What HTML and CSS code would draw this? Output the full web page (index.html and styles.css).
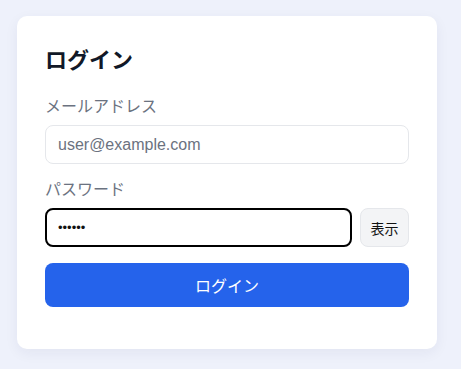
FILE: index.html
```html
<!DOCTYPE html>
<html lang="ja">
<head>
    <meta charset="UTF-8">
    <meta name="viewport" content="width=device-width, initial-scale=1.0">
    <title>ログイン</title>
    <link rel="stylesheet" href="styles.css">
</head>
<body>

<div class="card">
    <h1>ログイン</h1>
    <form id="login-form">
        <div class="field">
            <label for="email">メールアドレス</label>
            <input type="email" id="email" placeholder="user@example.com">
        </div>

        <div class="field">
            <label for="password">パスワード</label>
            <div class="password-row">
                <input type="password" id="password" class="focused" value="secret">
                <button type="button" id="toggle" class="toggle">表示</button>
            </div>
        </div>

        <button type="submit" class="submit">ログイン</button>
    </form>
</div>

<script>
    const pw = document.getElementById('password');
    pw.focus();
    pw.setSelectionRange(pw.value.length, pw.value.length);

    document.getElementById('toggle').addEventListener('click', function() {
        if (pw.type === 'password') {
            pw.type = 'text';
            this.textContent = '隠す';
        } else {
            pw.type = 'password';
            this.textContent = '表示';
        }
    });
</script>
</body>
</html>
```

FILE: styles.css
```css
/* Login card */
* {
    box-sizing: border-box;
}
body {
    margin: 0;
    padding: 16px 17px;
    background-color: #eef1fb;
    font-family: "Liberation Sans", "Noto Sans CJK JP", sans-serif;
}
.card {
    width: 420px;
    padding: 28px 28px 42px;
    background-color: #fff;
    border-radius: 10px;
    box-shadow: 0 4px 14px rgba(30, 41, 90, 0.06);
}
h1 {
    margin: 0 0 20px;
    font-size: 22px;
    line-height: 33px;
    font-weight: bold;
    color: #111827;
}
.field {
    margin-bottom: 16px;
}
label {
    display: block;
    margin-bottom: 8px;
    font-size: 16px;
    line-height: 20px;
    color: #6b7280;
}
input {
    width: 100%;
    height: 39px;
    padding: 0 12px;
    font-family: inherit;
    font-size: 16px;
    color: #111;
    border: 1px solid #e5e7eb;
    border-radius: 8px;
    outline: none;
}
input::placeholder {
    color: #6b7280;
}
.password-row {
    display: flex;
    gap: 8px;
}
.password-row input {
    flex: 1;
}
.focused {
    border: 2px solid #000;
    padding: 0 11px;
    font-size: 13px;
}
.toggle {
    width: 49px;
    height: 39px;
    padding: 0;
    font-family: inherit;
    font-size: 14px;
    color: #111;
    background-color: #f3f4f6;
    border: 1px solid #e5e7eb;
    border-radius: 8px;
    cursor: pointer;
}
.submit {
    display: block;
    width: 100%;
    height: 44px;
    margin-top: 14px;
    font-family: inherit;
    font-size: 16px;
    color: #fff;
    background-color: #2563eb;
    border: none;
    border-radius: 8px;
    cursor: pointer;
}
.submit:hover {
    background-color: #1d4ed8;
}
```
